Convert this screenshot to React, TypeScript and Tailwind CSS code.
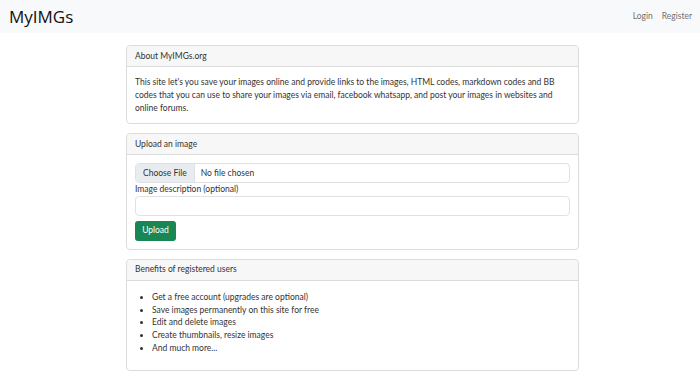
const font = { fontFamily: 'Lato, "Noto Sans", sans-serif' };

function Card({ title, children }: { title: string; children: React.ReactNode }) {
  return (
    <div className="rounded-[4px] border border-[#dcdcdc] bg-white">
      <div className="h-[21px] flex items-center px-[8px] bg-[#f7f7f7] border-b border-[#dcdcdc] rounded-t-[4px]">
        {title}
      </div>
      <div className="p-[8px]">{children}</div>
    </div>
  );
}

export default function App() {
  return (
    <div className="min-h-screen bg-white text-[8.5px] leading-[12.75px] text-[#333]" style={font}>
      <nav className="h-[33px] bg-[#f8f9fa] flex items-center justify-between pl-[9px] pr-[8px]">
        <a className="text-[17px] leading-none text-[#111]" style={{ fontFamily: '"Open Sans", sans-serif' }}>
          MyIMGs
        </a>
        <div className="flex gap-[9px] text-[#707070]">
          <a>Login</a>
          <a>Register</a>
        </div>
      </nav>

      <div className="ml-[126px] w-[453px] mt-[12px] flex flex-col gap-[9px] pb-[10px]">
        <Card title="About MyIMGs.org">
          <p className="mt-[1px] leading-[13px]">
            This site let's you save your images online and provide links to the images, HTML codes, markdown codes and BB
            <br />
            codes that you can use to share your images via email, facebook whatsapp, and post your images in websites and
            <br />
            online forums.
          </p>
        </Card>

        <Card title="Upload an image">
          <div className="flex h-[20px] rounded-[4px] border border-[#dee2e6] overflow-hidden">
            <div className="flex items-center px-[7px] bg-[#e9ecef] border-r border-[#dee2e6]">Choose File</div>
            <div className="flex items-center px-[6px]">No file chosen</div>
          </div>
          <label className="block">Image description (optional)</label>
          <div className="h-[20px] rounded-[4px] border border-[#dee2e6]" />
          <button className="mt-[5px] h-[20px] w-[41px] rounded-[3px] bg-[#198754] text-white flex items-center justify-center">
            Upload
          </button>
        </Card>

        <Card title="Benefits of registered users">
          <ul className="list-disc pl-[17px] mt-[2px] mb-[7px]">
            <li>Get a free account (upgrades are optional)</li>
            <li>Save images permanently on this site for free</li>
            <li>Edit and delete images</li>
            <li>Create thumbnails, resize images</li>
            <li>And much more...</li>
          </ul>
        </Card>
      </div>
    </div>
  );
}
